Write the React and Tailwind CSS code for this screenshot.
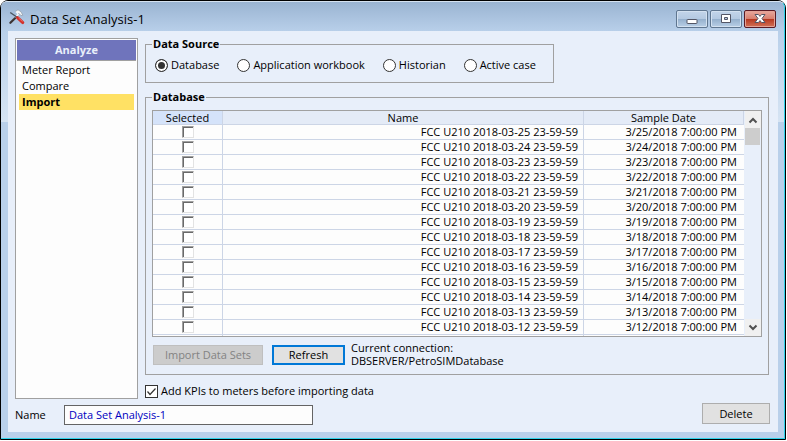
import React, { useState } from "react";

const days = [25, 24, 23, 22, 21, 20, 19, 18, 17, 16, 15, 14, 13, 12];
const sources = [
  { id: "database", label: "Database" },
  { id: "workbook", label: "Application workbook" },
  { id: "historian", label: "Historian" },
  { id: "active", label: "Active case" },
];

function ToolsIcon() {
  return (
    <svg width="16" height="16" viewBox="0 0 16 16" fill="none" aria-hidden="true">
      <path d="M6 2.600 9 .8l3 2 1.800 3.400-1.800.4-2-2.200-1.400 1" fill="#f4f6f8" stroke="#8d99a6" strokeWidth=".7" />
      <path d="M9.500 5 3 12.200" stroke="#f3f5f7" strokeWidth="1.700" />
      <path d="M6 9.200 1.400 13.800" stroke="#3b3333" strokeWidth="2.200" strokeLinecap="round" />
      <path d="M1.200 3.500 8.500 8.500" stroke="#4b545e" strokeWidth="1.400" />
      <path d="M8.500 8.700 13.800 13.600" stroke="#d3302a" strokeWidth="3" strokeLinecap="round" />
      <path d="M9.500 8.800 13.500 12.600" stroke="#f58b80" strokeWidth=".7" />
    </svg>
  );
}

function CaptionButton({ label, close, children }) {
  const tone = close
    ? "border-[#5a1a24] bg-linear-to-b from-[#e8a99f] from-0% via-[#d98272] via-45% to-[#c0593f] shadow-[inset_0_0_0_1px_#e3a397]"
    : "border-[#5f7690] bg-linear-to-b from-[#c3d5ea] from-0% via-[#b5cae2] via-45% to-[#a3bcd8] shadow-[inset_0_0_0_1px_#d3e1f0]";
  return (
    <button type="button" aria-label={label} className={`relative flex h-[18px] w-8 items-center justify-center overflow-hidden rounded-xs border ${tone}`}>
      <span className={close ? "absolute inset-x-px top-2 bottom-px bg-linear-to-b from-[#b5351d] to-[#cf6a50]" : "absolute inset-x-px top-2 bottom-px bg-linear-to-b from-[#94afcc] to-[#b4cbe3]"} />
      <svg className="relative" width="14" height="12" viewBox="0 0 14 12" aria-hidden="true">{children}</svg>
    </button>
  );
}

function Group({ title, className, children }) {
  return (
    <fieldset className={`border border-[#a0a0a0] ${className}`}>
      <legend className="px-px leading-3 font-bold">{title}</legend>
      {children}
    </fieldset>
  );
}

function Arrow({ d }) {
  return (
    <svg width="10" height="8" viewBox="0 0 10 8" fill="none" aria-hidden="true">
      <path d={d} stroke="#505050" strokeWidth="2" />
    </svg>
  );
}

export default function App() {
  const [source, setSource] = useState("database");
  return (
    <div className="min-h-screen bg-white pr-px pb-px font-['Open_Sans','Noto_Sans',sans-serif] text-[11px] leading-4 text-black">
      <div className="rounded-t-lg border border-black bg-[#b9d0ea]">
        <div className="rounded-t-md border-t border-r border-b border-t-[#d5e2f0] border-r-[#2fd3ea] border-b-[#2fd3ea] bg-[linear-gradient(#9ab4d2_0,#b9d0ea_30px,#d6e4f3_120px,#b9d0ea_120px)]">
          <header className="flex h-[29px] items-center pr-2 pl-2">
            <ToolsIcon />
            <h1 className="ml-[5px] flex-1 pt-1 text-[13px]">Data Set Analysis-1</h1>
            <div className="flex gap-0.5 pt-1">
              <CaptionButton label="Minimize">
                <rect x="2" y="6.5" width="10" height="4" rx=".5" fill="#fff" stroke="#535666" />
              </CaptionButton>
              <CaptionButton label="Maximize">
                <path d="M2.500 1.500h9v8h-9zM5.500 4.500v2h3v-2z" fill="#fff" fillRule="evenodd" stroke="#535666" />
              </CaptionButton>
              <CaptionButton label="Close" close>
                <path d="M2 1.500h3.400L7 3.400l1.600-1.900H12L9 5.500l3 4H8.600L7 7.600l-1.600 1.900H2l3-4z" fill="#fff" stroke="#535666" />
              </CaptionButton>
            </div>
          </header>

          <main className="mr-1.5 mb-1.5 ml-[7px] bg-[#e8effa] px-[7px] py-[7px]">
            <div className="flex gap-[7px] pr-0.5">
              <nav className="w-[123px] shrink-0 border border-[#a0a0a0] bg-[#fdfdfd] p-px">
                <h2 className="border-b border-[#a0a0a0] bg-[#6f74bc] text-center leading-5 font-bold text-[#e8effa]">Analyze</h2>
                <ul className="px-0.5 pt-px">
                  <li><button type="button" className="block w-full px-[3px] text-left">Meter Report</button></li>
                  <li><button type="button" className="block w-full px-[3px] text-left">Compare</button></li>
                  <li><button type="button" className="block w-full bg-[#ffe164] px-[3px] text-left font-bold">Import</button></li>
                </ul>
              </nav>

              <div className="min-w-0 flex-1">
                <Group title="Data Source" className="w-[409px] px-1.5 pb-[9px]">
                  <div className="flex gap-[18px] pt-[7px] pl-[3px]">
                    {sources.map((s) => (
                      <label key={s.id} className="flex items-center gap-[3px]">
                        <input
                          type="radio"
                          name="source"
                          checked={source === s.id}
                          onChange={() => setSource(s.id)}
                          className="size-[13px] appearance-none rounded-full border border-[#333] bg-white checked:bg-[#333] checked:shadow-[inset_0_0_0_2px_#fff]"
                        />
                        {s.label}
                      </label>
                    ))}
                  </div>
                </Group>

                <Group title="Database" className="mt-2 px-1.5 pb-[7px]">
                  <div className="mt-[7px] flex border border-[#a0a0a0] bg-[#fdfdfd]">
                    <table className="min-w-0 flex-1 table-fixed border-separate border-spacing-0">
                      <thead>
                        <tr className="h-3.5 bg-[#e4ebf7] leading-[13px]">
                          <th className="w-[70px] border-r border-b border-[#ccd5e6] bg-[#d5e3fa] p-0 font-normal">Selected</th>
                          <th className="border-r border-b border-[#ccd5e6] p-0 font-normal">Name</th>
                          <th className="w-40 border-r border-b border-[#ccd5e6] p-0 font-normal">Sample Date</th>
                        </tr>
                      </thead>
                      <tbody>
                        {days.map((d) => (
                          <tr key={d} className="h-[15px] text-right leading-[14px]">
                            <td className="border-r border-b border-[#ccd5e6] p-0">
                              <input type="checkbox" aria-label={`Select 2018-03-${d}`} className="mx-auto block size-3 appearance-none border border-t-[#a0a0a0] border-r-[#e3e3e3] border-b-[#e3e3e3] border-l-[#a0a0a0] bg-white shadow-[inset_1px_1px_0_#696969]" />
                            </td>
                            <td className="border-r border-b border-[#ccd5e6] py-0 pr-[5px] pl-0">FCC U210 2018-03-{d} 23-59-59</td>
                            <td className="border-b border-[#ccd5e6] py-0 pr-[7px] pl-0">3/{d}/2018 7:00:00 PM</td>
                          </tr>
                        ))}
                        <tr className="h-px">
                          <td className="border-r border-[#ccd5e6] p-0" />
                          <td className="border-r border-[#ccd5e6] p-0" />
                          <td className="p-0" />
                        </tr>
                      </tbody>
                    </table>
                    <div className="flex w-[17px] shrink-0 flex-col bg-[#e8effa] pl-px">
                      <button type="button" aria-label="Scroll up" className="flex h-[17px] items-center justify-center bg-[#f0f0f0]"><Arrow d="M1.500 6.500 5 3l3.500 3.500" /></button>
                      <div className="mr-px h-[17px] bg-[#cdcdcd]" />
                      <div className="flex-1" />
                      <button type="button" aria-label="Scroll down" className="flex h-[17px] items-center justify-center bg-[#f0f0f0]"><Arrow d="M1.500 1.500 5 5l3.500-3.500" /></button>
                    </div>
                  </div>
                  <div className="mt-1 flex items-center pl-px">
                    <button type="button" disabled className="mt-0.5 h-5 w-[110px] border border-[#bfbfbf] bg-[#ccc] text-[#838383]">Import Data Sets</button>
                    <button type="button" className="mt-0.5 ml-[9px] h-5 w-[73px] border-2 border-[#0078d7] bg-[#e1e1e1]">Refresh</button>
                    <div className="ml-1.5 leading-[13px]">
                      <p>Current connection:</p>
                      <p>DBSERVER/PetroSIMDatabase</p>
                    </div>
                  </div>
                </Group>

                <label className="mt-2 flex items-center gap-[3px]">
                  <span className="grid">
                    <input type="checkbox" defaultChecked className="peer col-start-1 row-start-1 size-[13px] appearance-none border border-[#333] bg-white" />
                    <svg className="pointer-events-none invisible col-start-1 row-start-1 peer-checked:visible" width="13" height="13" viewBox="0 0 13 13" fill="none" aria-hidden="true">
                      <path d="m2.500 6.500 2.500 3 5.500-6" stroke="#333" strokeWidth="1.200" />
                    </svg>
                  </span>
                  Add KPIs to meters before importing data
                </label>
              </div>
            </div>
            <div className="mt-1 flex items-start justify-between pr-px">
              <div className="flex items-center pt-0.5">
                <label htmlFor="set-name" className="w-[49px]">Name</label>
                <input id="set-name" defaultValue="Data Set Analysis-1" className="h-5 w-[249px] border border-[#646464] bg-[#fdfdfd] px-1 pb-0.5 text-[#0000c0]" />
              </div>
              <button type="button" className="h-[21px] w-[68px] border border-[#adadad] bg-[#e1e1e1]">Delete</button>
            </div>
          </main>
        </div>
      </div>
    </div>
  );
}
